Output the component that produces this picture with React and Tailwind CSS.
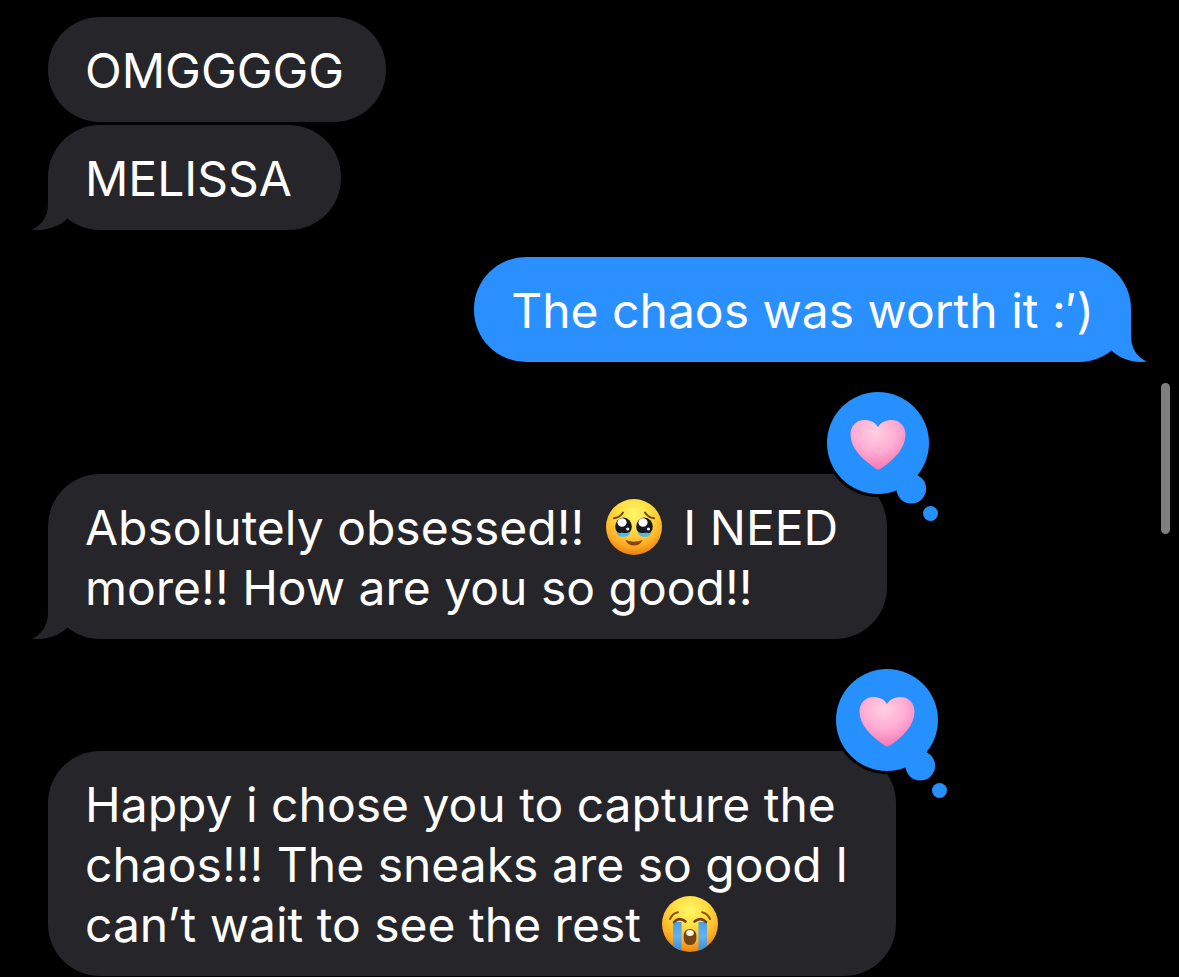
import clsx from "clsx";

const messages = [
  { id: 1, from: "them", text: ["OMGGGGG"], width: "min-w-[338px]" },
  { id: 2, from: "them", text: ["MELISSA"], width: "min-w-[293px]", tail: true },
  { id: 3, from: "me", text: ["The chaos was worth it :′)"], tail: true },
  {
    id: 4,
    from: "them",
    text: ["Absolutely obsessed!! ", <TearyFace key="teary" />, " I NEED ", "more!! How are you so good!!"],
    width: "max-w-[839px]",
    tail: true,
    reaction: "heart",
  },
  {
    id: 5,
    from: "them",
    text: [
      "Happy i chose you to capture the chaos!!! The sneaks are so good I can’t wait to see the rest ",
      <CryingFace key="crying" />,
    ],
    width: "max-w-[848px]",
    reaction: "heart",
  },
];

function FaceGradient({ id }) {
  return (
    <radialGradient id={id} cx="0.5" cy="0.26" r="0.76">
      <stop offset="0" stopColor="#fff765" />
      <stop offset="0.4" stopColor="#ffdc40" />
      <stop offset="0.74" stopColor="#ffb026" />
      <stop offset="1" stopColor="#e67c0c" />
    </radialGradient>
  );
}

function TearyFace() {
  return (
    <svg
      viewBox="0 0 58 58"
      role="img"
      aria-label="face holding back tears"
      className="mx-[7px] -my-2 inline-block size-[58px] align-[-3px]"
    >
      <defs>
        <FaceGradient id="tearyFill" />
      </defs>
      <circle cx="29" cy="29" r="28" fill="url(#tearyFill)" />
      <path
        d="M9 20.300c3.700-.5 7-2.600 9-5.800M49 20.300c-3.700-.5-7-2.600-9-5.800"
        fill="none"
        stroke="#79450b"
        strokeWidth="2"
        strokeLinecap="round"
      />
      <ellipse cx="18.500" cy="28.500" rx="8.300" ry="9" fill="#17171f" />
      <ellipse cx="39.500" cy="28.500" rx="8.300" ry="9" fill="#17171f" />
      <path
        d="M12 34.500c2.500 1 4 0 6.500.4s4.500 0 6.800-1.400c-.3 3.500-3 5.300-6.800 5.300s-6.300-1.600-6.500-4.300zM46 34.500c-2.500 1-4 0-6.500.4s-4.500 0-6.800-1.400c.3 3.500 3 5.300 6.800 5.300s6.300-1.600 6.500-4.300z"
        fill="#4cbdea"
      />
      <ellipse cx="17" cy="24.500" rx="4.600" ry="4.200" fill="#fff" />
      <ellipse cx="38" cy="24.500" rx="4.600" ry="4.200" fill="#fff" />
      <circle cx="22.700" cy="31" r="1.600" fill="#dff4ff" />
      <circle cx="43.500" cy="31" r="1.600" fill="#dff4ff" />
      <path d="M20.500 42q8.500 3.600 17 0c-1.500 3.700-4.700 5.500-8.500 5.500s-7-1.800-8.500-5.500z" fill="#854310" />
    </svg>
  );
}

function CryingFace() {
  return (
    <svg
      viewBox="0 0 58 58"
      role="img"
      aria-label="loudly crying face"
      className="mx-[7px] -my-2 inline-block size-[58px] align-[-3px]"
    >
      <defs>
        <FaceGradient id="cryingFill" />
        <linearGradient id="tears" x1="0" y1="0" x2="0" y2="1">
          <stop offset="0" stopColor="#4a9de2" />
          <stop offset="0.5" stopColor="#62b4f3" />
          <stop offset="1" stopColor="#3f8ad0" />
        </linearGradient>
      </defs>
      <circle cx="29" cy="29" r="28" fill="url(#cryingFill)" />
      <path
        d="M12 27h8.500v28.700c-3.300-1.100-6.100-2.600-8.500-4.700zM37.500 27H46v24c-2.300 2.100-5.200 3.600-8.500 4.700z"
        fill="url(#tears)"
      />
      <path
        d="M9 24c1.500-3.500 4.300-6 7.800-6.800M49 24c-1.500-3.500-4.300-6-7.800-6.800"
        fill="none"
        stroke="#8a520c"
        strokeWidth="2"
        strokeLinecap="round"
      />
      <path
        d="M13 27c3-3.500 7.500-4 11.500-.5M45 27c-3-3.500-7.500-4-11.500-.5"
        fill="none"
        stroke="#74420c"
        strokeWidth="2.600"
        strokeLinecap="round"
      />
      <rect x="22.700" y="34" width="12.600" height="16" rx="6.300" fill="#754412" />
      <ellipse cx="29" cy="38" rx="3.800" ry="3" fill="#fff6e8" />
    </svg>
  );
}

function Tail({ side }) {
  return (
    <svg
      viewBox="0 0 36 53"
      aria-hidden="true"
      className={clsx(
        "absolute bottom-0 h-[53px] w-9",
        side === "left" ? "-left-4 text-[#26262a]" : "-right-4 -scale-x-100 text-[#2a90ff]"
      )}
    >
      <path fill="currentColor" d="M16 0v27C16 39 10 48.500 0 52.500 13 54.200 26 50.500 35.500 41.500L36 0z" />
    </svg>
  );
}

function HeartReaction() {
  return (
    <svg
      viewBox="0 0 116 136"
      role="img"
      aria-label="Heart reaction"
      className="absolute -top-[86px] -right-[52px] h-[136px] w-[116px]"
    >
      <defs>
        <radialGradient id="heartFill" cx="0.45" cy="0.25" r="0.8">
          <stop offset="0" stopColor="#ffd0e2" />
          <stop offset="0.5" stopColor="#ffacd3" />
          <stop offset="1" stopColor="#f76fb0" />
        </radialGradient>
      </defs>
      <circle cx="55" cy="55" r="54" fill="#000" />
      <g fill="#2690ff">
        <circle cx="55" cy="55" r="51" />
        <circle cx="88.300" cy="100.700" r="14.800" />
        <circle cx="107.500" cy="125.500" r="7.500" />
      </g>
      <path
        d="M55 39c3-5 8-7 13.500-7 8.300 0 14 6.200 14 14.500 0 13.500-11 25-24.500 34-1.800 1.300-3.600 1.300-5.400 0C39 71 27.500 60 27.500 46.500c0-8.300 5.700-14.500 14-14.500C47 32 52 34 55 39z"
        fill="url(#heartFill)"
      />
    </svg>
  );
}

function Message({ message }) {
  const mine = message.from === "me";

  return (
    <li
      className={clsx(
        "relative w-fit rounded-[52px] px-[37px] pt-6 pb-[21px]",
        mine ? "self-end bg-[#2a90ff]" : "self-start bg-[#26262a]",
        message.reaction && "mt-[85px]",
        message.width
      )}
    >
      {message.tail && <Tail side={mine ? "right" : "left"} />}
      <p className="relative">{message.text}</p>
      {message.reaction && <HeartReaction />}
    </li>
  );
}

export default function App() {
  const groups = [messages.slice(0, 2), [messages[2]], [messages[3]], [messages[4]]];

  return (
    <main className="relative min-h-screen bg-black px-12 pt-[17px] font-['Inter',sans-serif] text-5xl leading-[60px] text-white">
      <div className="flex flex-col gap-[27px]">
        {groups.map((group) => (
          <ul key={group[0].id} className="flex flex-col gap-[3px]">
            {group.map((message) => (
              <Message key={message.id} message={message} />
            ))}
          </ul>
        ))}
      </div>
      <div className="absolute top-[383px] right-[9px] h-[151px] w-[9px] rounded-full bg-[#7f7f7f]" />
    </main>
  );
}
